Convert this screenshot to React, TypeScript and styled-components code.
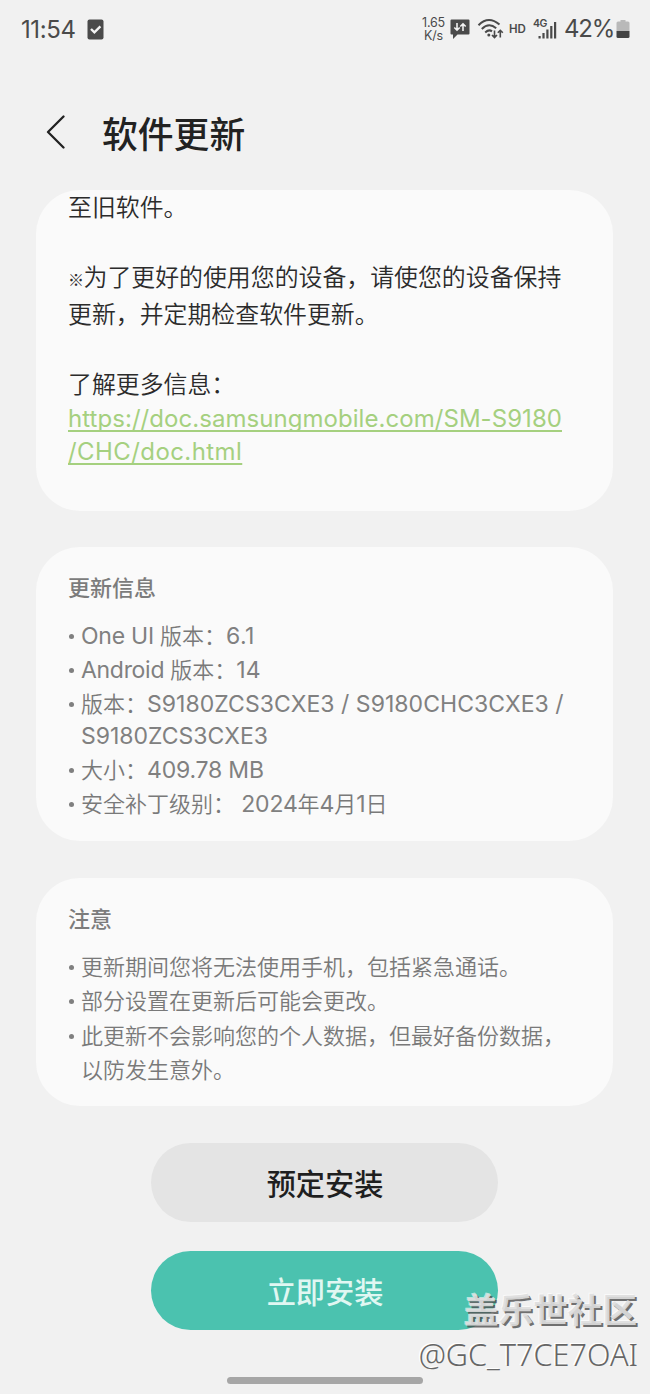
import React from "react";
import styled, { createGlobalStyle } from "styled-components";

const Global = createGlobalStyle`
  * { box-sizing: border-box; }
  body { margin: 0; background: #f1f1f1; }
`;

const Screen = styled.div`
  position: relative;
  width: 650px;
  height: 1394px;
  overflow: hidden;
  display: flex;
  flex-direction: column;
  background: #f1f1f1;
  font-family: Inter, "Noto Sans CJK SC", sans-serif;
`;

const StatusBar = styled.header`
  display: flex;
  align-items: center;
  justify-content: space-between;
  height: 58px;
  padding: 0 20px 0 21px;
  color: #4a4a4a;
`;

const StatusGroup = styled.div`
  display: flex;
  align-items: center;
`;

const Clock = styled.span`
  width: 66px;
  padding-top: 1px;
  font-size: 24px;
  line-height: 30px;
  font-weight: 380;
  letter-spacing: -0.4px;
  white-space: nowrap;
`;

const Speed = styled.span`
  width: 27px;
  margin-right: 3px;
  font-size: 12.5px;
  line-height: 13.5px;
  letter-spacing: -0.2px;
  text-align: center;
`;

const HdLabel = styled.span`
  width: 18px;
  margin: 0 6px 0 4px;
  font-size: 11.5px;
  line-height: 14px;
  font-weight: 600;
`;

const BatteryLevel = styled.span`
  width: 52px;
  margin-left: 6px;
  font-size: 24px;
  line-height: 30px;
  font-weight: 380;
  letter-spacing: -1.2px;
  white-space: nowrap;
`;

const TitleBar = styled.div`
  display: flex;
  align-items: center;
  height: 132px;
  padding: 16px 0 0 46px;
  gap: 36px;
`;

const Title = styled.h1`
  margin: 0;
  padding-top: 5px;
  font-size: 35.8px;
  line-height: 50px;
  font-weight: 500;
  color: #222;
`;

const Card = styled.section<{ $height: number; $gap: number; $top: number }>`
  flex: none;
  height: ${(p) => p.$height}px;
  margin: 0 37px ${(p) => p.$gap}px 36px;
  padding: ${(p) => p.$top}px 32px 0;
  border-radius: 44px;
  background: #fafafa;
  overflow: hidden;
`;

const Notes = styled.div`
  margin-top: -1px;
`;

const Paragraph = styled.p`
  margin: 0 0 33px;
  font-size: 23.9px;
  line-height: 37px;
  font-weight: 350;
  color: #2b2b2b;
  white-space: nowrap;
`;

const Mark = styled.span`
  display: inline-block;
  width: 15.5px;
  font-family: "Noto Sans CJK SC", sans-serif;
  font-size: 16px;
  line-height: 20px;
  font-weight: 500;
`;

const DocLink = styled.a`
  display: block;
  margin-top: -34px;
  font-size: 24px;
  line-height: 33px;
  font-weight: 400;
  color: #a5d07f;
  text-decoration: underline;
  text-decoration-thickness: 2px;
  text-underline-offset: 3px;
  text-decoration-skip-ink: none;
  white-space: nowrap;
`;

const LinkLine = styled.span<{ $spacing: number }>`
  letter-spacing: ${(p) => p.$spacing}px;
`;

const CardHeading = styled.h2`
  margin: 0 0 14px;
  font-size: 22px;
  line-height: 34px;
  font-weight: 500;
  color: #7c7c7c;
`;

const List = styled.ul`
  margin: 0;
  padding: 0;
  list-style: none;
`;

const Item = styled.li<{ $line?: number }>`
  display: flex;
  padding: ${(p) => (p.$line ? "1.5px 0 1px" : "0")};
  font-size: 22px;
  line-height: ${(p) => p.$line ?? 34.3}px;
  font-weight: 350;
  color: #797979;
  white-space: nowrap;

  &::before {
    content: "";
    flex: none;
    width: 5px;
    height: 5px;
    margin: ${(p) => (p.$line ? 13 : 15)}px 7px 0 1px;
    border-radius: 50%;
    background: #7f7f7f;
  }
`;

const Latin = styled.span<{ $spacing?: number }>`
  font-size: 23px;
  font-weight: 400;
  color: #808080;
  letter-spacing: ${(p) => p.$spacing ?? 0}px;
`;

const Actions = styled.div`
  display: flex;
  flex-direction: column;
  align-items: center;
  gap: 29px;
  padding-right: 1px;
`;

const Button = styled.button<{ $primary?: boolean }>`
  width: 347px;
  height: 79px;
  padding: 5px 0 0 1px;
  border: 0;
  border-radius: 40px;
  background: ${(p) => (p.$primary ? "#4bc2af" : "#e4e4e4")};
  color: ${(p) => (p.$primary ? "#e0f7f2" : "#1f1f1f")};
  font-family: inherit;
  font-size: 29.2px;
  line-height: 40px;
  font-weight: 500;
`;

const HomeBar = styled.div`
  width: 196px;
  height: 7px;
  margin: 47px 0 0 227px;
  border-radius: 4px;
  background: #a6a6a6;
`;

const Watermark = styled.div`
  position: absolute;
  right: 12px;
  bottom: 17px;
  text-align: right;
  white-space: nowrap;
`;

const Community = styled.div`
  margin-right: 1px;
  font-size: 34.6px;
  line-height: 42px;
  font-weight: 700;
  color: rgba(222, 222, 222, 0.92);
  text-shadow: 2px 2px 0 rgba(70, 70, 70, 0.75), -1px -1px 0 rgba(255, 255, 255, 0.6);
`;

const Author = styled.div`
  font-family: "Noto Sans", sans-serif;
  font-weight: 300;
  font-size: 30.6px;
  line-height: 46px;
  color: #666;
  text-shadow: -1.5px -1.5px 0 #fff;
`;

const TaskIcon = () => (
  <svg width="17" height="21" viewBox="0 0 17 21">
    <rect x="0.5" y="0.5" width="16" height="20" rx="2" fill="#4a4a4a" />
    <path d="M4 10l3.4 3.4 6-6" fill="none" stroke="#f3f3f3" strokeWidth="2.4" />
  </svg>
);

const TrafficShape = styled.svg`
  margin-right: 7px;
`;

const TrafficIcon = () => (
  <TrafficShape width="20" height="21" viewBox="0 0 20 21">
    <path d="M1.5 0.5h17q1 0 1 1v13q0 1-1 1H7.5L3 20V15.500H1.500q-1 0-1-1v-13q0-1 1-1z" fill="#4a4a4a" />
    <path d="M7 4v7M4.300 8.500L7 11.200l2.700-2.700M13 12V4.800M10.300 7.500L13 4.800l2.700 2.700" fill="none" stroke="#f1f1f1" strokeWidth="1.600" />
  </TrafficShape>
);

const WifiIcon = () => (
  <svg width="28" height="22" viewBox="0 0 28 22" fill="none" stroke="#4a4a4a">
    <path d="M1.500 7.200Q11.500-2.800 22.500 6.600M4.800 11Q11.800 4 19.200 10.200M8.200 14.400Q12 11 15 13.400" strokeWidth="2" />
    <circle cx="11.800" cy="17" r="1.500" fill="#4a4a4a" stroke="none" />
    <path d="M17.500 12.500v7M15 17l2.500 2.600L20 17M23.300 19.500v-7M20.800 14.800l2.500-2.500 2.500 2.500" strokeWidth="1.600" />
  </svg>
);

const SignalIcon = () => (
  <svg width="25" height="22" viewBox="0 0 25 22" fill="#4a4a4a">
    <text x="0" y="9" fontSize="10.500" fontWeight="600" fontFamily="Inter" letterSpacing="-0.500">4G</text>
    <rect x="5.500" y="18" width="2.200" height="2.500" />
    <rect x="9.400" y="15" width="2.200" height="5.500" />
    <rect x="13.300" y="11.500" width="2.200" height="9" />
    <rect x="17.200" y="8" width="2.200" height="12.500" />
    <rect x="21" y="4" width="2.200" height="16.500" />
  </svg>
);

const BatteryIcon = () => (
  <svg width="14" height="20" viewBox="0 0 14 20">
    <path d="M4.500 1h5v1.500H12q1.500 0 1.500 1.500V12H.5V4Q.5 2.500 2 2.500h2.500z" fill="#b9b9b9" />
    <path d="M.5 12h13v5.500q0 1.500-1.500 1.500H2Q.5 19 .5 17.500z" fill="#434343" />
  </svg>
);

const BackIcon = () => (
  <svg width="20" height="34" viewBox="0 0 20 34">
    <path d="M17.500 1.500L2 17l15.500 15.500" fill="none" stroke="#222" strokeWidth="2.300" strokeLinecap="round" strokeLinejoin="round" />
  </svg>
);

export default function App() {
  return (
    <Screen>
      <Global />
      <StatusBar>
        <StatusGroup>
          <Clock>11:54</Clock>
          <TaskIcon />
        </StatusGroup>
        <StatusGroup>
          <Speed>1.65<br />K/s</Speed>
          <TrafficIcon />
          <WifiIcon />
          <HdLabel>HD</HdLabel>
          <SignalIcon />
          <BatteryLevel>42%</BatteryLevel>
          <BatteryIcon />
        </StatusGroup>
      </StatusBar>

      <TitleBar>
        <BackIcon />
        <Title>软件更新</Title>
      </TitleBar>

      <Card $height={321} $gap={36} $top={0}>
        <Notes>
          <Paragraph>至旧软件。</Paragraph>
          <Paragraph>
            <Mark>※</Mark>为了更好的使用您的设备，请使您的设备保持
            <br />
            更新，并定期检查软件更新。
          </Paragraph>
          <Paragraph>了解更多信息：</Paragraph>
          <DocLink>
            <LinkLine $spacing={0.05}>https://doc.samsungmobile.com/SM-S9180</LinkLine>
            <br />
            <LinkLine $spacing={0.42}>/CHC/doc.html</LinkLine>
          </DocLink>
        </Notes>
      </Card>

      <Card $height={294} $gap={37} $top={24}>
        <CardHeading>更新信息</CardHeading>
        <List>
          <Item><span><Latin $spacing={-0.25}>One UI </Latin>版本：<Latin $spacing={0.4}>6.1</Latin></span></Item>
          <Item><span><Latin $spacing={-0.3}>Android </Latin>版本：<Latin>14</Latin></span></Item>
          <Item $line={31.5}>
            <span>
              版本：<Latin $spacing={0.04}>S9180ZCS3CXE3 / S9180CHC3CXE3 /</Latin>
              <br />
              <Latin>S9180ZCS3CXE3</Latin>
            </span>
          </Item>
          <Item><span>大小：<Latin $spacing={-0.2}>409.78 MB</Latin></span></Item>
          <Item><span>安全补丁级别：<Latin $spacing={-0.2}> 2024</Latin>年<Latin $spacing={-0.2}>4</Latin>月<Latin $spacing={-0.2}>1</Latin>日</span></Item>
        </List>
      </Card>

      <Card $height={228} $gap={37} $top={24}>
        <CardHeading>注意</CardHeading>
        <List>
          <Item>更新期间您将无法使用手机，包括紧急通话。</Item>
          <Item>部分设置在更新后可能会更改。</Item>
          <Item><span>此更新不会影响您的个人数据，但最好备份数据，<br />以防发生意外。</span></Item>
        </List>
      </Card>

      <Actions>
        <Button>预定安装</Button>
        <Button $primary>立即安装</Button>
      </Actions>
      <HomeBar />

      <Watermark>
        <Community>盖乐世社区</Community>
        <Author>@GC_T7CE7OAI</Author>
      </Watermark>
    </Screen>
  );
}
